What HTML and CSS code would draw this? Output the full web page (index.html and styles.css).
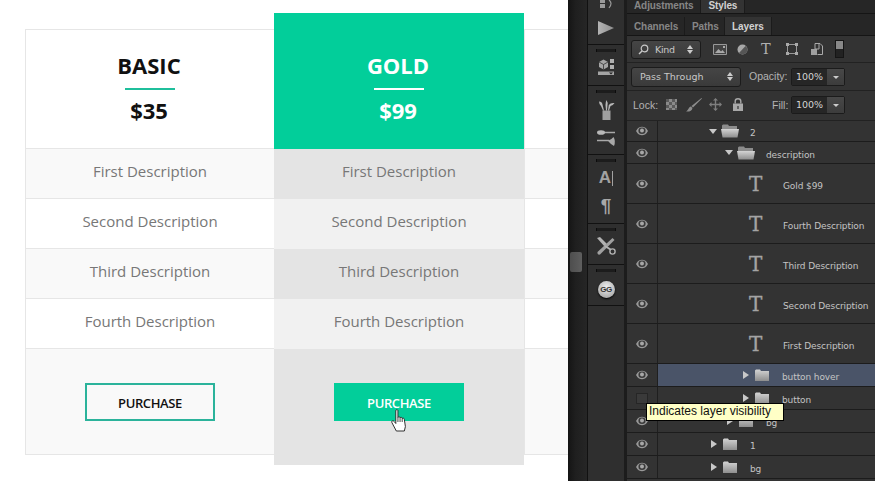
FILE: index.html
```html
<!DOCTYPE html>
<html lang="en">
<head>
<meta charset="utf-8">
<title>Pricing table in Photoshop</title>
<link rel="stylesheet" href="styles.css">
</head>
<body>
<svg class="defs" width="0" height="0" aria-hidden="true">
  <defs>
    <linearGradient id="fold" x1="0" y1="0" x2="0" y2="1"><stop offset="0" stop-color="#d4d4d4"/><stop offset="1" stop-color="#8e8e8e"/></linearGradient>
    <linearGradient id="play-fill" x1="0" y1="0" x2="1" y2="0"><stop offset="0" stop-color="#b4b4b4"/><stop offset="1" stop-color="#8e8e8e"/></linearGradient>
  </defs>
  <symbol id="eye" viewBox="0 0 12 10">
    <path d="M0 5C2 1.500 4 .8 6 .8S10 1.500 12 5C10 8.500 8 9.200 6 9.200S2 8.500 0 5Z" fill="#9a9a9a"/>
    <ellipse cx="6" cy="4.800" rx="3.600" ry="3.300" fill="#3a3a3a"/>
    <circle cx="6" cy="4.600" r="2" fill="#a8a8a8"/>
  </symbol>
  <symbol id="folder-open" viewBox="0 0 18 14">
    <path d="M1 3V1.500L2 .5H7L8 2H16V5H1Z" fill="#8c8c8c"/>
    <path d="M0 5H18L16.500 13.500H1.500Z" fill="url(#fold)"/>
  </symbol>
  <symbol id="folder" viewBox="0 0 14 12">
    <path d="M0 1.500L1 .5H5L6 2H14V12H0Z" fill="url(#fold)"/>
  </symbol>
  <symbol id="grip" viewBox="0 0 20 3">
    <path d="M0 0h20v3H0Z" fill="#0c0c0c"/>
    <path d="M2 0v3M4 0v3M6 0v3M8 0v3M10 0v3M12 0v3M14 0v3M16 0v3M18 0v3" stroke="#3e3e3e" stroke-width=".7"/>
  </symbol>
</svg>

<div class="stage">
  <main class="pricing">
    <section class="plan">
      <header class="plan-head">
        <h2 class="plan-name">BASIC</h2>
        <span class="plan-rule"></span>
        <p class="plan-price">$35</p>
      </header>
      <p class="row shade">First Description</p>
      <p class="row">Second Description</p>
      <p class="row shade">Third Description</p>
      <p class="row">Fourth Description</p>
      <div class="cta shade"><a class="buy">PURCHASE</a></div>
    </section>

    <section class="plan featured">
      <header class="plan-head">
        <h2 class="plan-name">GOLD</h2>
        <span class="plan-rule"></span>
        <p class="plan-price">$99</p>
      </header>
      <p class="row shade">First Description</p>
      <p class="row">Second Description</p>
      <p class="row shade">Third Description</p>
      <p class="row">Fourth Description</p>
      <div class="cta shade">
        <a class="buy">PURCHASE</a>
        <svg class="hand" viewBox="0 0 15 23" width="16" height="23" preserveAspectRatio="none" aria-hidden="true">
          <path d="M4.500 1.500C4.500.5 6.500.5 6.500 1.500V8.500C7 7.500 8.500 7.500 8.500 8.800 9 8 10.500 8.200 10.500 9.500 11.200 8.800 12.500 9.200 12.500 10.500L13.500 17.500 12.500 22H5L.8 13.500C.2 12 1.800 11 3 12.500L4.500 14.500Z" fill="#fff" stroke="#222" stroke-width=".9"/>
          <path d="M6.500 8.500V13M8.500 8.800V13M10.500 9.500V13" stroke="#222" stroke-width=".8" fill="none"/>
        </svg>
      </div>
    </section>

    <section class="plan">
      <header class="plan-head"></header>
      <p class="row shade"></p>
      <p class="row"></p>
      <p class="row shade"></p>
      <p class="row"></p>
      <div class="cta shade"></div>
    </section>
  </main>

  <div class="track"><span class="thumb"></span></div>

  <nav class="tools">
    <div class="tool-group tg-1">
      <svg class="ic" width="16" height="9" viewBox="0 0 16 9" aria-hidden="true">
        <path d="M2 0h5v3H2ZM2 4h5v4H2Z" fill="#999"/><path d="M11 0Q15 3 11 8" stroke="#999" fill="none" stroke-width="1.200"/>
      </svg>
      <svg class="ic play" width="16" height="14" viewBox="0 0 16 14" aria-hidden="true"><path d="M0 0L16 7 0 14Z" fill="url(#play-fill)"/></svg>
    </div>
    <div class="tool-group tg-2">
      <svg class="grip" width="20" height="3"><use href="#grip"/></svg>
      <svg class="ic" width="16" height="17" viewBox="0 0 16 17" aria-hidden="true">
        <path d="M1 3L5.500.5 10 3V8L5.500 10.500 1 8Z" fill="#a4a4a4"/><path d="M1 3L5.500 5.500 10 3M5.500 5.500V10.500" stroke="#333" stroke-width=".8" fill="none"/>
        <path d="M12 0h4v4h-4ZM12 6h4v4h-4Z" fill="#b0b0b0"/><path d="M0 12.500h16v3.500H0Z" fill="#a4a4a4"/><path d="M11 13.500h4l-2 2Z" fill="#222"/>
      </svg>
    </div>
    <div class="tool-group tg-3">
      <svg class="grip" width="20" height="3"><use href="#grip"/></svg>
      <svg class="ic brushes" width="17" height="20" viewBox="0 0 17 20" aria-hidden="true">
        <path d="M4.500 10.500h8V20h-8Z" fill="#a0a0a0"/>
        <path d="M1 1.500Q4 1.500 4.500 4.500L6 10.500H5L3 6Q1 4 1 1.500Z" fill="#b8b8b8"/>
        <path d="M8.500 0Q10 2.500 9.500 5L9 10.500H8L7.500 5Q7.500 2 8.500 0Z" fill="#b8b8b8"/>
        <path d="M16.500 3Q15 5.500 12.500 6L11 10.500H10L10.800 5Q12.500 2.500 16.500 3Z" fill="#b8b8b8"/>
      </svg>
      <svg class="ic sliders" width="19" height="17" viewBox="0 0 19 17" aria-hidden="true">
        <path d="M7 1.800h11v1.400H7ZM0 9.800h12v1.400H0Z" fill="#a8a8a8"/>
        <ellipse cx="4" cy="2.500" rx="4" ry="2.300" fill="#b8b8b8"/>
        <path d="M11.500 10.500Q14 10 16.500 7 19 11 17 16 14 14.500 11.500 11.500Z" fill="#a8a8a8"/>
      </svg>
    </div>
    <div class="tool-group tg-4">
      <svg class="grip" width="20" height="3"><use href="#grip"/></svg>
      <span class="glyph-a">A<i class="caret"></i></span>
      <span class="glyph-p">¶</span>
    </div>
    <div class="tool-group tg-5">
      <svg class="grip" width="20" height="3"><use href="#grip"/></svg>
      <svg class="ic" width="20" height="18" viewBox="0 0 20 18" aria-hidden="true">
        <path d="M1 1L4 0 11 7 8.500 9.500Z" fill="#b2b2b2"/>
        <path d="M16.500 1L18.500 3 4 17.500C2.500 18 1 17 1.500 15Z" fill="#a0a0a0"/>
        <circle cx="16.500" cy="14.500" r="2.600" fill="none" stroke="#b2b2b2" stroke-width="1.400"/>
        <path d="M9 9L14.500 12.500" stroke="#b2b2b2" stroke-width="2"/>
      </svg>
    </div>
    <div class="tool-group tg-6">
      <svg class="grip" width="20" height="3"><use href="#grip"/></svg>
      <span class="gg">GG</span>
    </div>
    <div class="tool-group tg-rest"></div>
  </nav>

  <aside class="panel">
    <div class="tabs tabs-top">
      <span class="tab">Adjustments</span>
      <span class="tab on">Styles</span>
    </div>
    <div class="tabs tabs-sub">
      <span class="tab tab-ch">Channels</span>
      <span class="tab tab-pa">Paths</span>
      <span class="tab on">Layers</span>
    </div>

    <div class="bar bar-filter">
      <div class="select select-kind">
        <svg width="11" height="11" viewBox="0 0 11 11" aria-hidden="true"><circle cx="6.500" cy="4.500" r="3.300" fill="none" stroke="#c8c8c8" stroke-width="1.200"/><path d="M4 7L1 10" stroke="#c8c8c8" stroke-width="1.400"/></svg>
        <span class="select-label">Kind</span>
        <span class="updown"></span>
      </div>
      <div class="filter-icons">
        <svg width="14" height="11" viewBox="0 0 14 11" aria-hidden="true"><path d="M.5.500h13v10H.5Z" fill="#444" stroke="#999"/><path d="M2 9L5.500 5 8 7.500 9.500 6 12 9Z" fill="#aaa"/><path d="M10 2h2v2h-2Z" fill="#aaa"/></svg>
        <svg class="fi-circle" width="11" height="11" viewBox="0 0 11 11" aria-hidden="true"><circle cx="5.500" cy="5.500" r="5" fill="#a8a8a8"/><path d="M8.500 2L2 9A5 5 0 0 0 10.500 5.500 5 5 0 0 0 8.500 2Z" fill="#555"/></svg>
        <span class="filter-t">T</span>
        <svg class="fi-box" width="12" height="12" viewBox="0 0 12 12" aria-hidden="true"><path d="M1.500 1.500h9v9h-9Z" fill="none" stroke="#999"/><path d="M0 0h3v3H0ZM9 0h3v3H9ZM0 9h3v3H0ZM9 9h3v3H9Z" fill="#aaa"/></svg>
        <svg width="12" height="12" viewBox="0 0 12 12" aria-hidden="true"><path d="M0 6h6v6H0Z" fill="#a0a0a0"/><path d="M6.500.5H9L11.500 3V11.500H6.500" fill="none" stroke="#aaa"/><path d="M4 .5H8V6H4Z" fill="none" stroke="#aaa"/></svg>
        <span class="toggle"></span>
      </div>
    </div>

    <div class="bar bar-blend">
      <div class="select select-blend">
        <span class="select-label">Pass Through</span>
        <span class="updown"></span>
      </div>
      <span class="bar-label label-op">Opacity:</span>
      <div class="num"><span class="num-val">100%</span><span class="num-btn"></span></div>
    </div>

    <div class="bar bar-lock">
      <span class="bar-label label-lock">Lock:</span>
      <div class="lock-icons">
        <svg width="11" height="11" viewBox="0 0 11 11" aria-hidden="true"><path d="M0 0h11v11H0Z" fill="#8a8a8a"/><path d="M0 0h3v3H0ZM6 0h3v3H6ZM3 3h3v3H3ZM9 3h2v3H9ZM0 6h3v3H0ZM6 6h3v3H6ZM3 9h3v2H3ZM9 9h2v2H9Z" fill="#5a5a5a"/></svg>
        <svg class="li-brush" width="16" height="14" viewBox="0 0 16 14" aria-hidden="true"><path d="M15.500 0L16 .5 7 9.500 5.500 8ZM5 8.500L6.500 10C6 13 3 14 0 13.500 2.500 12.500 2.500 9 5 8.500Z" fill="#8c8c8c"/></svg>
        <svg class="li-move" width="13" height="13" viewBox="0 0 13 13" aria-hidden="true"><path d="M6.500 0L9 2.500H7.200V5.800H10.500V4L13 6.500 10.500 9V7.200H7.200V10.500H9L6.500 13 4 10.500H5.800V7.200H2.500V9L0 6.500 2.500 4V5.800H5.800V2.500H4Z" fill="#7e7e7e"/></svg>
        <svg class="li-lock" width="10" height="13" viewBox="0 0 10 13" aria-hidden="true"><path d="M0 5.500h10V13H0Z" fill="#a8a8a8"/><path d="M2.200 5.500V3.200a2.800 2.500 0 0 1 5.600 0V5.500" fill="none" stroke="#a8a8a8" stroke-width="1.400"/><path d="M4.300 8h1.400v3H4.300Z" fill="#444"/></svg>
      </div>
      <span class="bar-label label-fill">Fill:</span>
      <div class="num"><span class="num-val">100%</span><span class="num-btn"></span></div>
    </div>

    <ul class="layers">
      <li class="layer h-21"><span class="vis"><svg class="eye" width="12" height="10"><use href="#eye"/></svg></span><div class="item in-2"><i class="arrow-down"></i><svg class="fo" width="18" height="14"><use href="#folder-open"/></svg><span class="name">2</span></div></li>
      <li class="layer h-22"><span class="vis"><svg class="eye" width="12" height="10"><use href="#eye"/></svg></span><div class="item in-3"><i class="arrow-down"></i><svg class="fo" width="18" height="14"><use href="#folder-open"/></svg><span class="name">description</span></div></li>
      <li class="layer h-40"><span class="vis"><svg class="eye" width="12" height="10"><use href="#eye"/></svg></span><div class="item in-t"><span class="type-t">T</span><span class="name">Gold $99</span></div></li>
      <li class="layer h-40"><span class="vis"><svg class="eye" width="12" height="10"><use href="#eye"/></svg></span><div class="item in-t"><span class="type-t">T</span><span class="name">Fourth Description</span></div></li>
      <li class="layer h-40"><span class="vis"><svg class="eye" width="12" height="10"><use href="#eye"/></svg></span><div class="item in-t"><span class="type-t">T</span><span class="name">Third Description</span></div></li>
      <li class="layer h-40"><span class="vis"><svg class="eye" width="12" height="10"><use href="#eye"/></svg></span><div class="item in-t"><span class="type-t">T</span><span class="name">Second Description</span></div></li>
      <li class="layer h-40"><span class="vis"><svg class="eye" width="12" height="10"><use href="#eye"/></svg></span><div class="item in-t"><span class="type-t">T</span><span class="name">First Description</span></div></li>
      <li class="layer h-23 selected"><span class="vis"><svg class="eye" width="12" height="10"><use href="#eye"/></svg></span><div class="item in-4"><i class="arrow-right"></i><svg class="fc" width="14" height="12"><use href="#folder"/></svg><span class="name">button hover</span></div></li>
      <li class="layer h-23"><span class="vis"><span class="eye-off"></span></span><div class="item in-4"><i class="arrow-right"></i><svg class="fc" width="14" height="12"><use href="#folder"/></svg><span class="name">button</span></div></li>
      <li class="layer h-23"><span class="vis"><svg class="eye" width="12" height="10"><use href="#eye"/></svg></span><div class="item in-3b"><i class="arrow-right"></i><svg class="fc" width="14" height="12"><use href="#folder"/></svg><span class="name">bg</span></div></li>
      <li class="layer h-23"><span class="vis"><svg class="eye" width="12" height="10"><use href="#eye"/></svg></span><div class="item in-2b"><i class="arrow-right"></i><svg class="fc" width="14" height="12"><use href="#folder"/></svg><span class="name">1</span></div></li>
      <li class="layer h-23"><span class="vis"><svg class="eye" width="12" height="10"><use href="#eye"/></svg></span><div class="item in-2b"><i class="arrow-right"></i><svg class="fc" width="14" height="12"><use href="#folder"/></svg><span class="name">bg</span></div></li>
    </ul>
    <div class="tooltip">Indicates layer visibility</div>
  </aside>
</div>
</body>
</html>
```

FILE: styles.css
```css
* { box-sizing: border-box; }
html, body { margin: 0; padding: 0; height: 100%; overflow: hidden; background: #fff; }
.defs { position: absolute; }
h2, p, ul { margin: 0; padding: 0; }
ul { list-style: none; }

.stage { display: flex; width: 875px; height: 481px; }

/* pricing table */
.pricing {
  width: 568px; flex: none; height: 481px; overflow: hidden;
  display: flex; align-items: flex-start; padding: 13px 0 0 25px;
  font-family: "Open Sans", sans-serif; background: #fff;
}
.plan {
  flex: none; width: 249px; margin-top: 16px;
  border: 1px solid #e6e6e6; border-right: 0; text-align: center;
}
.plan:last-child { width: 250px; }
.plan-head {
  height: 119px; border-bottom: 1px solid #e6e6e6; background: #fff;
  display: flex; flex-direction: column; align-items: center; padding-top: 20px;
}
.plan-name { font-size: 22px; line-height: 30px; font-weight: 700; color: #111; margin-right: 2px; }
.plan-rule { width: 50px; height: 2px; margin-top: 8px; background: #1fbf9c; }
.plan-price { font-size: 22px; line-height: 30px; font-weight: 700; color: #111; margin: 5px 2px 0 0; }
.row {
  height: 50px; border-bottom: 1px solid #e6e6e6; background: #fff;
  font-size: 15px; line-height: 45px; color: #777;
}
.shade { background: #f9f9f9; }
.cta {
  height: 105px; padding-top: 34px; display: flex; justify-content: center; align-items: flex-start;
  position: relative;
}
.buy {
  display: block; width: 130px; height: 38px; border: 2px solid #2bb39b;
  font-size: 13px; letter-spacing: -.4px; font-weight: 600; line-height: 37px; color: #111;
}

/* highlighted plan */
.featured { width: 250px; margin-top: 0; border: 0; }
.featured .plan-head { height: 136px; border: 0; background: #02ce9a; padding-top: 37px; }
.featured .plan-name, .featured .plan-price { color: #fff; }
.featured .plan-rule { background: #fff; }
.featured .row { background: #f1f1f1; border: 0; }
.featured .row.shade { background: #e4e4e4; }
.featured .cta { height: 116px; background: #e4e4e4; }
.featured .buy { background: #02ce9a; border-color: #02ce9a; color: #fff; }
.hand { position: absolute; left: 117px; top: 60px; }

/* scroll strip */
.track {
  width: 19px; flex: none; padding: 252px 0 0 2px;
  background: linear-gradient(90deg, #141414, #1f1f1f 40%, #262626);
}
.thumb {
  display: block; width: 12px; height: 20px; border-radius: 2px;
  background: linear-gradient(90deg, #4e4e4e, #5e5e5e);
}

/* tools column */
.tools {
  width: 40px; flex: none; display: flex; flex-direction: column;
  background: #2f2f2f; border-left: 1px solid #111; border-right: 3px solid #1c1c1c;
}
.tool-group {
  display: flex; flex-direction: column; align-items: center;
  border-bottom: 1px solid #111; padding-top: 4px;
}
.tg-1 { height: 45px; padding-top: 0; gap: 12px; }
.tg-2 { height: 41px; }
.tg-3 { height: 69px; }
.tg-4 { height: 69px; }
.tg-5 { height: 41px; }
.tg-6 { height: 41px; }
.tg-rest { flex: 1; border: 0; }
.grip { display: block; flex: none; }
.ic { display: block; flex: none; }
.tg-2 .ic { margin-top: 7px; }
.brushes { margin-top: 7px; }
.sliders { margin-top: 10px; }
.glyph-a {
  display: flex; align-items: center; margin-top: 5px; height: 22px;
  font-family: "Liberation Sans", sans-serif; font-size: 17px; font-weight: 700; color: #a2a2a2;
}
.caret { width: 1px; height: 15px; margin-left: 1px; background: #a2a2a2; }
.glyph-p {
  font-family: "Liberation Sans", sans-serif; font-size: 19px; line-height: 22px;
  font-weight: 700; color: #a8a8a8; margin-top: 6px;
}
.tg-5 .ic { margin-top: 6px; }
.gg {
  width: 17px; height: 17px; margin-top: 9px; border-radius: 50%;
  background: radial-gradient(circle at 50% 35%, #eee, #9a9a9a);
  box-shadow: 0 1px 2px #000;
  font-family: "Liberation Sans Narrow", "Liberation Sans", sans-serif;
  font-size: 8px; font-weight: 700; line-height: 17px; text-align: center; color: #333; letter-spacing: -.5px;
}

/* panel */
.panel {
  position: relative; flex: 1; min-width: 0; background: #333;
  font-family: "DejaVu Sans", sans-serif; color: #c8c8c8;
}
.tabs { display: flex; align-items: flex-end; background: #262626; font-size: 9px; padding-left: 0; }
.tabs-top { height: 14px; border-bottom: 1px solid #151515; }
.tabs-sub { height: 22px; padding-top: 3px; border-bottom: 1px solid #151515; }
.tab {
  display: block; padding: 0 7px; line-height: 19px; color: #868686; font-weight: 700;
  font-family: "Liberation Sans", sans-serif; font-size: 10px; letter-spacing: -.1px;
  border-right: 1px solid #1b1b1b; height: 100%;
}
.tabs-top .tab { line-height: 11px; }
.tab-ch { width: 58px; }
.tab-pa { width: 40px; }
.tab.on { background: #333; color: #d2d2d2; }
.bar { display: flex; align-items: center; border-bottom: 1px solid #222; padding-left: 4px; }
.bar-filter { height: 27px; }
.bar-blend { height: 28px; }
.bar-lock { height: 30px; padding: 0 0 2px 6px; }
.select {
  display: flex; align-items: center; gap: 6px; height: 19px; padding: 0 6px 0 8px; position: relative;
  background: linear-gradient(#454545, #3a3a3a); border: 1px solid #1b1b1b; border-radius: 3px;
  font-size: 9.500px; color: #c8c8c8;
}
.select-kind { width: 70px; padding-left: 6px; letter-spacing: -.3px; }
.select-blend { width: 110px; height: 20px; }
.select-label { flex: 1; }
.updown { width: 0; height: 9px; position: relative; margin-right: 4px; }
.updown::before, .updown::after {
  content: ""; position: absolute; left: -3px; border-left: 3px solid transparent; border-right: 3px solid transparent;
}
.updown::before { top: 0; border-bottom: 4px solid #ccc; }
.updown::after { bottom: 0; border-top: 4px solid #ccc; }
.filter-icons { display: flex; align-items: center; gap: 13px; margin-left: 12px; }
.fi-circle { margin-left: -3px; }
.fi-box { margin-left: 2px; }
.filter-t { font-family: "DejaVu Serif", serif; font-size: 14.500px; line-height: 15px; color: #b0b0b0; }
.toggle { width: 9px; height: 18px; margin-left: -1px; border: 1px solid #151515; background: linear-gradient(#888 50%, #222 50%); }
.bar-label { font-family: "Liberation Sans", sans-serif; font-size: 10.500px; color: #b4b4b4; flex: none; white-space: nowrap; }
.label-op { width: 42px; margin: 0 0 2px 8px; }
.num { display: flex; height: 18px; width: 54px; flex: none; border: 1px solid #1b1b1b; border-radius: 2px; }
.num-val { width: 35px; background: #262626; font-size: 9.500px; line-height: 16px; text-align: center; color: #d4d4d4; }
.num-btn { flex: 1; background: linear-gradient(#484848, #3c3c3c); position: relative; }
.num-btn::after {
  content: ""; position: absolute; left: 6px; top: 7px;
  border-left: 3px solid transparent; border-right: 3px solid transparent; border-top: 3px solid #ccc;
}
.label-lock { width: 33px; }
.lock-icons { display: flex; align-items: center; flex: none; }
.li-brush { margin-left: 9px; }
.li-move { margin-left: 7px; }
.li-lock { margin-left: 11px; }
.label-fill { width: 19px; margin-left: 29px; }

/* layers */
.layer { display: flex; border-bottom: 1px solid #1c1c1c; }
.h-21 { height: 21px; }
.h-22 { height: 22px; }
.h-23 { height: 23px; }
.h-40 { height: 40px; }
.vis {
  width: 31px; flex: none; display: flex; align-items: center; justify-content: center;
  border-right: 1px solid #1f1f1f; padding-right: 1px;
}
.eye { display: block; }
.eye-off { width: 12px; height: 11px; background: #3a3a3a; border: 1px solid #262626; }
.item { flex: 1; min-width: 0; display: flex; align-items: center; font-size: 9px; letter-spacing: -.1px; color: #c4c4c4; }
.selected .item { background: #4a5468; }
.name { white-space: nowrap; padding-top: 4px; }
.in-2 { padding-left: 51px; }
.in-3 { padding-left: 67px; }
.in-t { padding-left: 91px; }
.in-4 { padding-left: 85px; }
.in-3b { padding-left: 69px; }
.in-2b { padding-left: 53px; }
.arrow-down {
  width: 0; height: 0; margin-right: 4px;
  border-left: 4px solid transparent; border-right: 4px solid transparent; border-top: 5px solid #c8c8c8;
}
.arrow-right {
  width: 0; height: 0; margin-right: 6px;
  border-top: 4px solid transparent; border-bottom: 4px solid transparent; border-left: 6px solid #c8c8c8;
}
.fo { margin-right: 11px; flex: none; }
.fc { margin-right: 13px; flex: none; }
.type-t {
  width: 34px; flex: none; padding-top: 2px; font-family: "DejaVu Serif", serif; font-size: 20px; line-height: 21px;
  color: #a4a4a4; -webkit-text-stroke: .3px #a4a4a4;
}
.tooltip {
  position: absolute; left: 19px; top: 403px; width: 138px; height: 18px;
  background: #ffffc6; border: 1px solid #000;
  font-family: "Liberation Sans", sans-serif; font-size: 12px; line-height: 15px; color: #111; padding-left: 2px;
  white-space: nowrap;
}
```
